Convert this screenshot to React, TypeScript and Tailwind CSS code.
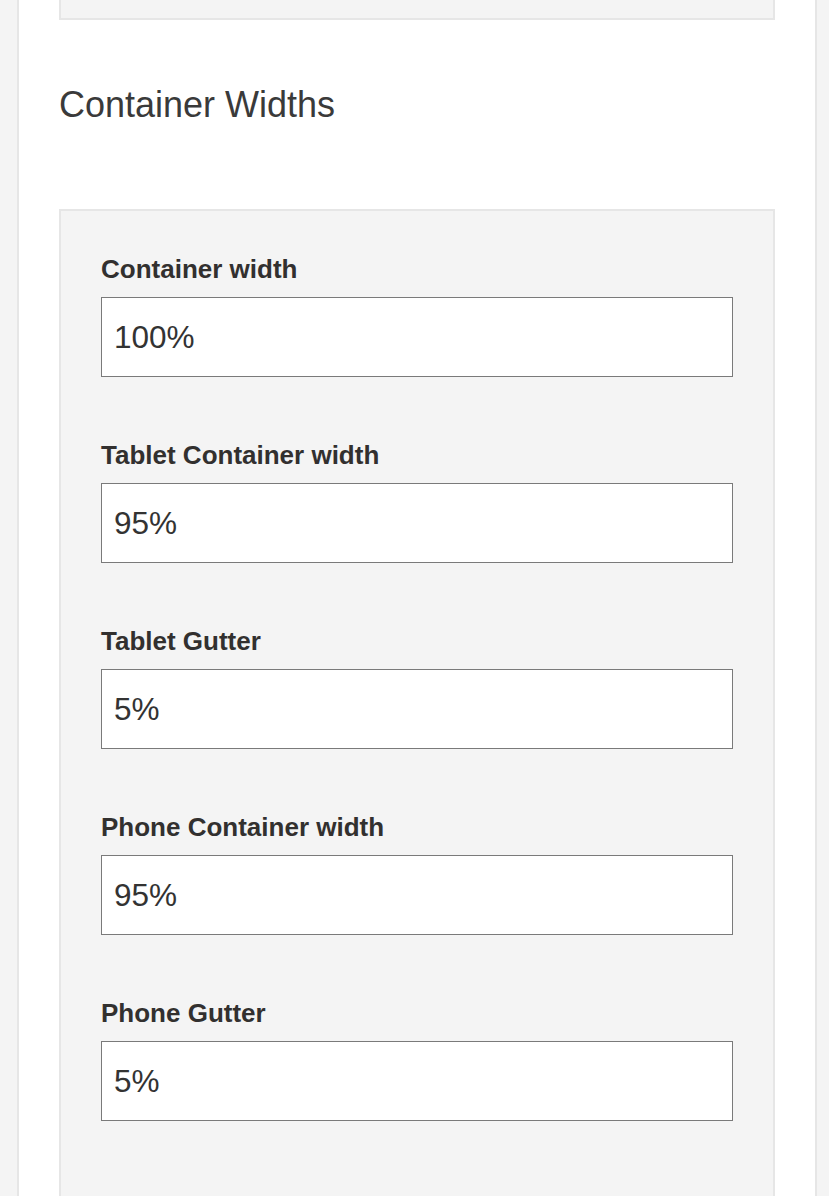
import React from "react";

const fields = [
  { label: "Container width", value: "100%" },
  { label: "Tablet Container width", value: "95%" },
  { label: "Tablet Gutter", value: "5%" },
  { label: "Phone Container width", value: "95%" },
  { label: "Phone Gutter", value: "5%" },
];

export default function App() {
  return (
    <div
      className="h-[1196px] w-full overflow-hidden bg-[#f4f4f4]"
      style={{ fontFamily: '"Liberation Sans", Arial, Helvetica, sans-serif' }}
    >
      <div className="ml-[17px] flex h-full w-[800px] flex-col border-x-2 border-[#e6e6e6] bg-white px-[40px]">
        <div className="h-[20px] shrink-0 border-x-2 border-b-2 border-[#e6e6e6] bg-[#f4f4f4]" />
        <h2 className="mt-[63px] mb-[83px] text-[36px] font-normal leading-[43px] text-[#3a3a3a]">
          Container Widths
        </h2>
        <div className="flex shrink-0 flex-col border-2 border-[#e6e6e6] bg-[#f4f4f4] px-[40px] pt-[40px] pb-[200px]">
          {fields.map((f) => (
            <div key={f.label} className="mb-[60px] flex flex-col">
              <label className="mb-[10px] text-[26px] font-bold leading-[36px] text-[#32302f]">
                {f.label}
              </label>
              <input
                readOnly
                value={f.value}
                className="h-[80px] w-full border border-[#7a7a7a] bg-white px-[12px] text-[31.5px] text-[#333] outline-none"
                style={{ fontFamily: '"Liberation Sans", Arial, Helvetica, sans-serif' }}
              />
            </div>
          ))}
        </div>
      </div>
    </div>
  );
}
